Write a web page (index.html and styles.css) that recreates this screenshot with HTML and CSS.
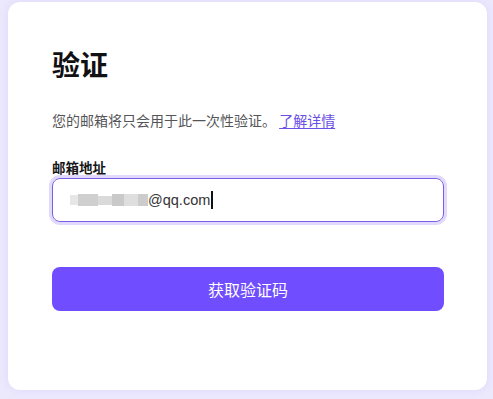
FILE: index.html
```html
<!DOCTYPE html>
<html lang="zh-CN">
<head>
<meta charset="utf-8">
<title>验证</title>
<link rel="stylesheet" href="styles.css">
</head>
<body>
<main class="card">
  <h1 class="title">验证</h1>
  <p class="desc">您的邮箱将只会用于此一次性验证。 <a class="link" href="#">了解详情</a></p>
  <label class="label">邮箱地址</label>
  <div class="input">
    <span class="mask"><i class="m1"></i><i class="m2"></i><i class="m3"></i><i class="m4"></i><i class="m5"></i><i class="m6"></i></span><span class="value">@qq.com</span><span class="caret"></span>
  </div>
  <button class="btn" type="button">获取验证码</button>
</main>
</body>
</html>
```

FILE: styles.css
```css
* { box-sizing: border-box; }
html, body { height: 100%; }
body {
  margin: 0;
  padding: 2px 6px 9px 8px;
  background: #ece9fd;
  font-family: "Noto Sans CJK SC", "Liberation Sans", sans-serif;
}
.card {
  background: #ffffff;
  border-radius: 12px;
  height: 388px;
  padding: 44px 43px 0 44px;
  box-shadow: 0 0 10px rgba(160, 140, 240, 0.18);
}
.title {
  margin: 0;
  font-size: 28px;
  line-height: 36px;
  font-weight: 700;
  color: #111114;
}
.desc {
  margin: 28px 0 0;
  font-size: 14px;
  line-height: 20px;
  color: #555558;
}
.link {
  color: #6a4ee6;
  text-decoration: underline;
  text-underline-offset: 2px;
}
.label {
  display: block;
  margin-top: 27px;
  font-size: 13.5px;
  line-height: 20px;
  font-weight: 700;
  color: #161618;
}
.input {
  margin-top: 1px;
  height: 44px;
  border: 1.5px solid #7a5fe2;
  border-radius: 8px;
  box-shadow: 0 0 0 3px #e1dafc;
  display: flex;
  align-items: center;
  padding-left: 17px;
  font-family: "Liberation Sans", Arial, sans-serif;
  font-size: 14.5px;
  color: #333336;
}
.mask {
  display: flex;
  align-items: center;
  height: 12px;
  filter: blur(0.6px);
}
.mask i { display: block; height: 12px; }
.mask .m1 { width: 8px; background: #e6e6e6; height: 10px; }
.mask .m2 { width: 20px; background: #cfcfcf; }
.mask .m3 { width: 14px; background: #dadada; height: 9px; }
.mask .m4 { width: 12px; background: #c9c9c9; }
.mask .m5 { width: 14px; background: #dedede; }
.mask .m6 { width: 10px; background: #cccccc; }
.value { line-height: 20px; }
.caret {
  width: 1.5px;
  height: 18px;
  background: #111;
  margin-left: 1px;
}
.btn {
  display: block;
  width: 100%;
  margin-top: 45px;
  height: 44px;
  border: 0;
  border-radius: 8px;
  background: #704dff;
  color: #ffffff;
  font-family: "Noto Sans CJK SC", sans-serif;
  font-size: 16px;
  cursor: pointer;
}
```
